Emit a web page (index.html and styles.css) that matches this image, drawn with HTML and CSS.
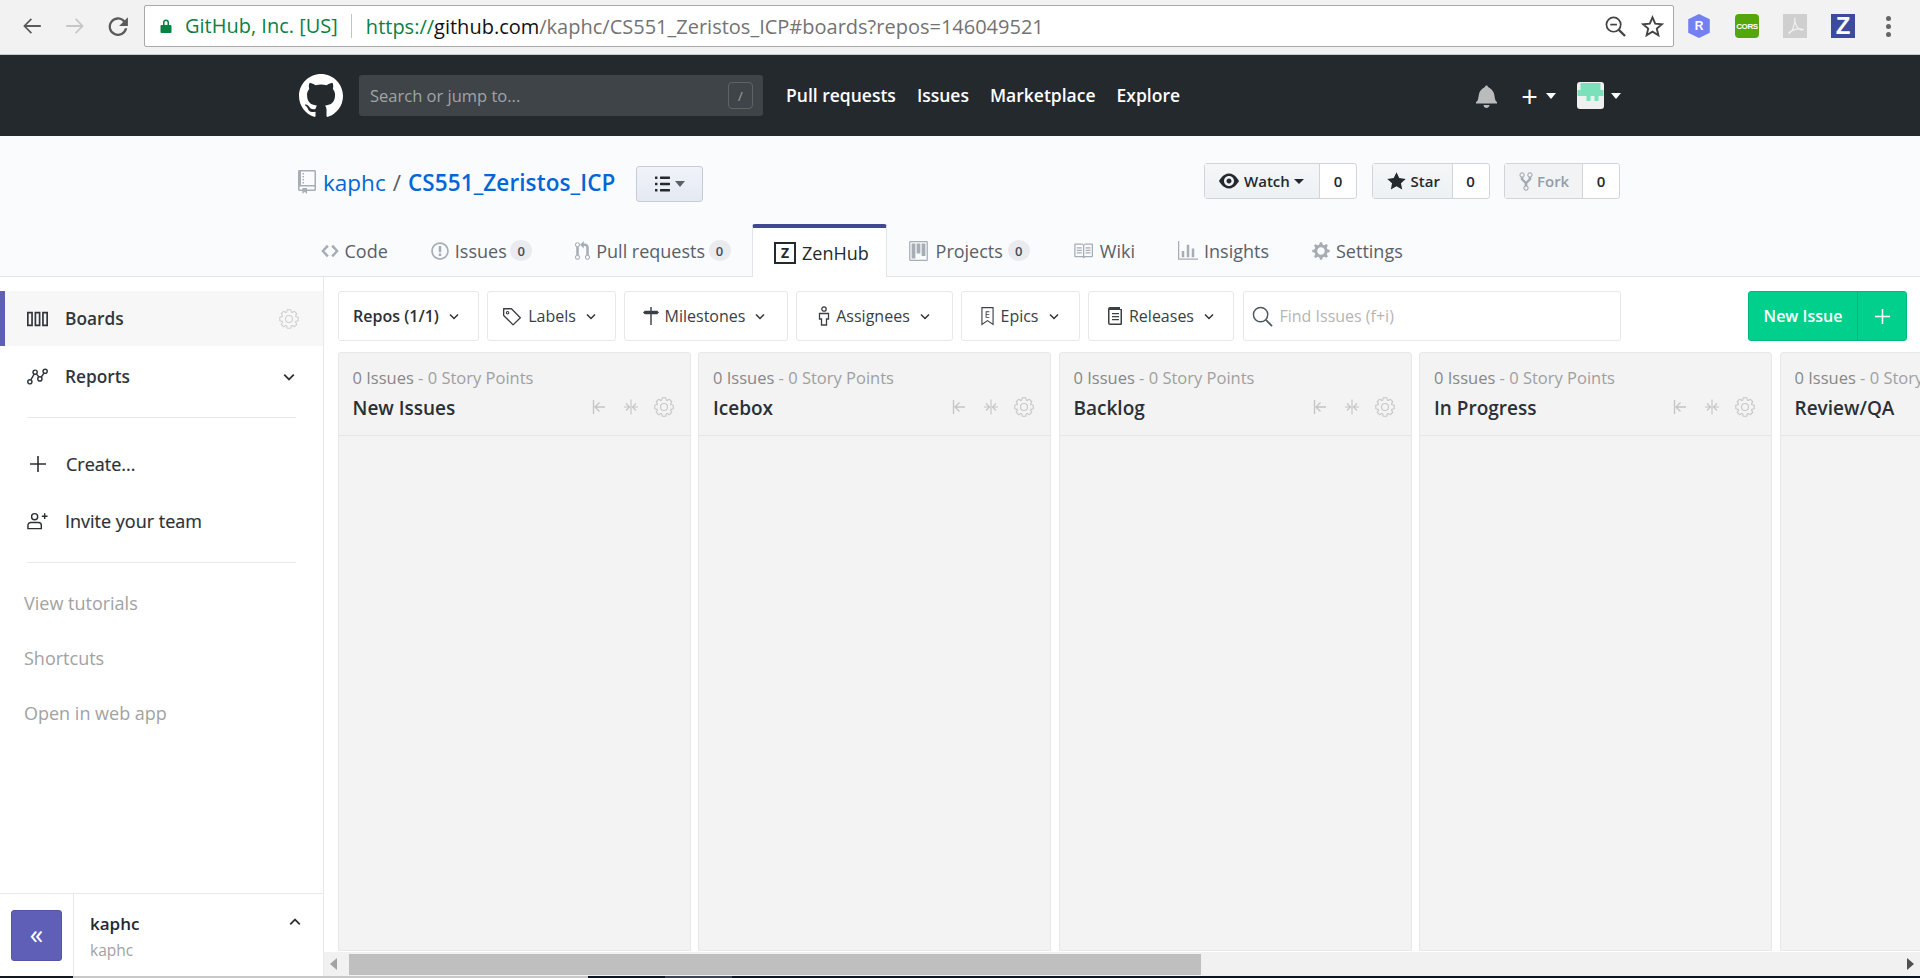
FILE: index.html
```html
<!DOCTYPE html>
<html lang="en">
<head>
<meta charset="utf-8">
<title>kaphc/CS551_Zeristos_ICP</title>
<link rel="stylesheet" href="styles.css">
</head>
<body>
<svg class="defs" width="0" height="0" aria-hidden="true">
  <symbol id="i-mark" viewBox="0 0 16 16"><path d="M8 0C3.58 0 0 3.58 0 8c0 3.54 2.29 6.53 5.47 7.59.4.07.55-.17.55-.38 0-.19-.01-.82-.01-1.49-2.01.37-2.53-.49-2.69-.94-.09-.23-.48-.94-.82-1.13-.28-.15-.68-.52-.01-.53.63-.01 1.08.58 1.23.82.72 1.21 1.87.87 2.33.66.07-.52.28-.87.51-1.07-1.78-.2-3.64-.89-3.64-3.95 0-.87.31-1.59.82-2.15-.08-.2-.36-1.02.08-2.12 0 0 .67-.21 2.2.82.64-.18 1.32-.27 2-.27.68 0 1.36.09 2 .27 1.53-1.04 2.2-.82 2.2-.82.44 1.1.16 1.92.08 2.12.51.56.82 1.27.82 2.15 0 3.07-1.87 3.75-3.65 3.95.29.25.54.73.54 1.48 0 1.07-.01 1.93-.01 2.2 0 .21.15.46.55.38A8.013 8.013 0 0 0 16 8c0-4.42-3.58-8-8-8z"/></symbol>
  <symbol id="i-gear" viewBox="0 0 14 16"><path d="M14 8.77v-1.6l-1.94-.64-.45-1.09.88-1.84-1.13-1.13-1.81.91-1.09-.45-.69-1.92h-1.6l-.63 1.94-1.11.45-1.84-.88-1.13 1.13.91 1.81-.45 1.09L0 7.23v1.59l1.94.64.45 1.09-.88 1.84 1.13 1.13 1.81-.91 1.09.45.69 1.92h1.59l.63-1.94 1.11-.45 1.84.88 1.13-1.13-.92-1.81.47-1.09L14 8.75v.02zM7 11c-1.66 0-3-1.34-3-3s1.34-3 3-3 3 1.34 3 3-1.34 3-3 3z"/></symbol>
  <symbol id="i-gear-line" viewBox="0 0 20 20"><g fill="none" stroke="currentColor" stroke-width="1.100" transform="translate(10 10)"><polygon stroke-linejoin="round" points="6.81,-2.34 9.23,-1.79 9.23,1.79 6.81,2.34 6.47,3.16 7.79,5.26 5.26,7.79 3.16,6.47 2.34,6.81 1.79,9.23 -1.79,9.23 -2.34,6.81 -3.16,6.47 -5.26,7.79 -7.79,5.26 -6.47,3.16 -6.81,2.34 -9.23,1.79 -9.23,-1.79 -6.81,-2.34 -6.47,-3.16 -7.79,-5.26 -5.26,-7.79 -3.16,-6.47 -2.34,-6.81 -1.79,-9.23 1.79,-9.23 2.34,-6.81 3.16,-6.47 5.26,-7.79 7.79,-5.26 6.47,-3.16"/><circle r="3.500"/></g></symbol>
  <symbol id="i-eye" viewBox="0 0 16 16"><path d="M8.06 2C3 2 0 8 0 8s3 6 8.06 6C13 14 16 8 16 8s-3-6-7.94-6zM8 12c-2.2 0-4-1.78-4-4 0-2.2 1.8-4 4-4 2.22 0 4 1.8 4 4 0 2.22-1.78 4-4 4zm2-4c0 1.11-.89 2-2 2-1.11 0-2-.89-2-2 0-1.11.89-2 2-2 1.11 0 2 .89 2 2z"/></symbol>
  <symbol id="i-star" viewBox="0 0 14 16"><path d="M14 6l-4.9-.64L7 1 4.9 5.36 0 6l3.6 3.26L2.67 14 7 11.67 11.33 14l-.93-4.74L14 6z"/></symbol>
  <symbol id="i-fork" viewBox="0 0 10 16"><path d="M8 1a1.993 1.993 0 0 0-1 3.72V6L5 8 3 6V4.72A1.993 1.993 0 0 0 2 1a1.993 1.993 0 0 0-1 3.72V6.5l3 3v1.78A1.993 1.993 0 0 0 5 15a1.993 1.993 0 0 0 1-3.72V9.5l3-3V4.72A1.993 1.993 0 0 0 8 1zM2 4.2C1.34 4.2.8 3.65.8 3c0-.65.55-1.2 1.2-1.2.65 0 1.2.55 1.2 1.2 0 .65-.55 1.2-1.2 1.2zm3 10c-.66 0-1.2-.55-1.2-1.2 0-.65.55-1.2 1.2-1.2.65 0 1.2.55 1.2 1.2 0 .65-.55 1.2-1.2 1.2zm3-10c-.66 0-1.2-.55-1.2-1.2 0-.65.55-1.2 1.2-1.2.65 0 1.2.55 1.2 1.2 0 .65-.55 1.2-1.2 1.2z"/></symbol>
  <symbol id="i-code" viewBox="0 0 14 16"><path d="M9.5 3L8 4.5 11.5 8 8 11.5 9.5 13 14 8 9.5 3zm-5 0L0 8l4.5 5L6 11.5 2.5 8 6 4.5 4.5 3z"/></symbol>
  <symbol id="i-issue" viewBox="0 0 14 16"><path d="M7 2.3c3.14 0 5.7 2.56 5.7 5.7s-2.56 5.7-5.7 5.7A5.71 5.71 0 0 1 1.3 8c0-3.14 2.56-5.7 5.7-5.7zM7 1C3.14 1 0 4.14 0 8s3.14 7 7 7 7-3.14 7-7-3.14-7-7-7zm1 3H6v5h2V4zm0 6H6v2h2v-2z"/></symbol>
  <symbol id="i-pr" viewBox="0 0 12 16"><path d="M11 11.28V5c-.03-.78-.34-1.47-.94-2.06C9.46 2.35 8.78 2.03 8 2H7V0L4 3l3 3V4h1c.27.02.48.11.69.31.21.2.3.42.31.69v6.28A1.993 1.993 0 0 0 10 15a1.993 1.993 0 0 0 1-3.72zm-1 2.92c-.66 0-1.2-.55-1.2-1.2 0-.65.55-1.2 1.2-1.2.65 0 1.2.55 1.2 1.2 0 .65-.55 1.2-1.2 1.2zM4 3c0-1.11-.89-2-2-2a1.993 1.993 0 0 0-1 3.72v6.56A1.993 1.993 0 0 0 2 15a1.993 1.993 0 0 0 1-3.72V4.72c.59-.34 1-.98 1-1.72zm-.8 10c0 .66-.55 1.2-1.2 1.2-.65 0-1.2-.55-1.2-1.2 0-.65.55-1.2 1.2-1.2.65 0 1.2.55 1.2 1.2zM2 4.2C1.34 4.2.8 3.65.8 3c0-.65.55-1.2 1.2-1.2.65 0 1.2.55 1.2 1.2 0 .65-.55 1.2-1.2 1.2z"/></symbol>
  <symbol id="i-project" viewBox="0 0 15 16"><path d="M10 12h3V2h-3v10zm-4-2h3V2H6v8zm-4 4h3V2H2v12zm-1 1h13V1H1v14zM14 0H1a1 1 0 0 0-1 1v14a1 1 0 0 0 1 1h13a1 1 0 0 0 1-1V1a1 1 0 0 0-1-1z"/></symbol>
  <symbol id="i-book" viewBox="0 0 16 16"><path d="M3 5h4v1H3V5zm0 3h4V7H3v1zm0 2h4V9H3v1zm11-5h-4v1h4V5zm0 2h-4v1h4V7zm0 2h-4v1h4V9zm2-6v9c0 .55-.45 1-1 1H9.5l-1 1-1-1H2c-.55 0-1-.45-1-1V3c0-.55.45-1 1-1h5.5l1 1 1-1H15c.55 0 1 .45 1 1zm-8 .5L7.5 3H2v9h6V3.5zm7-.5H9.5l-.5.5V12h6V3z"/></symbol>
  <symbol id="i-graph" viewBox="0 0 16 16"><path d="M16 14v1H0V0h1v14h15zM5 13H3V8h2v5zm4 0H7V3h2v10zm4 0h-2V6h2v7z"/></symbol>
  <symbol id="i-repo" viewBox="0 0 12 16"><path d="M4 9H3V8h1v1zm0-3H3v1h1V6zm0-2H3v1h1V4zm0-2H3v1h1V2zm8-1v12c0 .55-.45 1-1 1H6v2l-1.5-1.5L3 16v-2H1c-.55 0-1-.45-1-1V1c0-.55.45-1 1-1h10c.55 0 1 .45 1 1zm-1 10H1v2h2v-1h3v1h5v-2zm0-10H2v9h9V1z"/></symbol>
  <symbol id="i-bell" viewBox="0 0 14 16"><path d="M14 12v1H0v-1l.73-.58c.77-.77.81-2.55 1.19-4.42C2.69 3.23 6 2 6 2c0-.55.45-1 1-1s1 .45 1 1c0 0 3.39 1.23 4.16 5 .38 1.88.42 3.66 1.19 4.42l.66.58H14zm-7 4c1.11 0 2-.89 2-2H5c0 1.11.89 2 2 2z"/></symbol>
  <symbol id="i-list" viewBox="0 0 12 16"><path d="M2 13c0 .59 0 1-.59 1H.59C0 14 0 13.59 0 13c0-.59 0-1 .59-1h.81c.59 0 .59.41.59 1H2zm2.59-9h6.81c.59 0 .59-.41.59-1 0-.59 0-1-.59-1H4.59C4 2 4 2.41 4 3c0 .59 0 1 .59 1zM1.41 7H.59C0 7 0 7.41 0 8c0 .59 0 1 .59 1h.81c.59 0 .59-.41.59-1 0-.59 0-1-.59-1h.01zm0-5H.59C0 2 0 2.41 0 3c0 .59 0 1 .59 1h.81c.59 0 .59-.41.59-1 0-.59 0-1-.59-1h.01zm10 5H4.59C4 7 4 7.41 4 8c0 .59 0 1 .59 1h6.81c.59 0 .59-.41.59-1 0-.59 0-1-.59-1h.01zm0 5H4.59C4 12 4 12.41 4 13c0 .59 0 1 .59 1h6.81c.59 0 .59-.41.59-1 0-.59 0-1-.59-1h.01z"/></symbol>
  <symbol id="i-chev" viewBox="0 0 10 6"><path d="M1 1l4 4 4-4" fill="none" stroke="currentColor" stroke-width="1.5"/></symbol>
  <symbol id="i-tag" viewBox="0 0 18 18"><path d="M1.5 2.5h7l8 8-6.5 6.5-8.5-8.5z" fill="none" stroke="currentColor" stroke-width="1.2" stroke-linejoin="round"/><circle cx="5" cy="6" r="1.1" fill="none" stroke="currentColor"/></symbol>
  <symbol id="i-miles" viewBox="0 0 18 20"><path d="M8.200 0h1.600v4H16l2 2-2 2H9.800v12H8.200V8H2L0 6l2-2h6.200z"/></symbol>
  <symbol id="i-person" viewBox="0 0 12 20"><circle cx="6" cy="3" r="2.2" fill="none" stroke="currentColor" stroke-width="1.3"/><path d="M1.5 7.5h9v5.5h-2v6h-5v-6h-2z" fill="none" stroke="currentColor" stroke-width="1.3"/></symbol>
  <symbol id="i-epic" viewBox="0 0 14 20"><path d="M1 1h12v18l-6-4-6 4z" fill="none" stroke="currentColor" stroke-width="1.2"/><path d="M5 5h4v1H6v2h3v1H6v2h3v1H5z"/></symbol>
  <symbol id="i-release" viewBox="0 0 16 20"><path d="M3 1h10v2h2v15a1 1 0 0 1-1 1H3a2 2 0 0 1-2-2V3a2 2 0 0 1 2-2zm-.5 3v13a.6.6 0 0 0 .6.6H13.500V4zM5 7h7v1.200H5zm0 3h7v1.200H5zm0 3h7v1.200H5z"/></symbol>
  <symbol id="i-collapse" viewBox="0 0 13 16"><path d="M1.500 1v14M13 8H3M7.500 3.500L3 8l4.500 4.500" fill="none" stroke="currentColor" stroke-width="1.300"/></symbol>
  <symbol id="i-wip" viewBox="0 0 14 16"><path d="M7 .5v15M0 8h5M2 4.500L5.500 8 2 11.500M14 8H9M12 4.500L8.500 8l3.500 3.500" fill="none" stroke="currentColor" stroke-width="1.100"/></symbol>
</svg>

<header class="chrome">
  <div class="chrome-nav">
    <svg class="cicon" viewBox="0 0 20 20"><path d="M18 9H5l5-5-1.100-1.100L2 10l6.900 7.100L10 16l-5-5h13z"/></svg>
    <svg class="cicon cicon-off" viewBox="0 0 20 20"><path d="M2 9h13l-5-5 1.100-1.100L18 10l-6.900 7.100L10 16l5-5H2z"/></svg>
    <svg class="cicon" viewBox="0 0 20 20"><path d="M16.200 4.800A8.500 8.500 0 1 0 18.400 12h-2.200a6.400 6.400 0 1 1-1.500-5.700L11 10h8V2z"/></svg>
  </div>
  <div class="omnibox">
    <svg class="lock" viewBox="0 0 12 16"><path d="M3 7V4.500a3 3 0 0 1 6 0V7h1.500a1 1 0 0 1 1 1v6a1 1 0 0 1-1 1h-9a1 1 0 0 1-1-1V8a1 1 0 0 1 1-1zm1.500 0h3V4.500a1.500 1.500 0 0 0-3 0z"/></svg>
    <span class="ev">GitHub, Inc. [US]</span>
    <span class="url"><span class="url-s">https://</span><span class="url-h">github.com</span>/kaphc/CS551_Zeristos_ICP#boards?repos=146049521</span>
    <svg class="omni-icon" viewBox="0 0 22 22"><circle cx="9" cy="9" r="7.500" fill="none" stroke="currentColor" stroke-width="1.800"/><path d="M5.500 9h7" stroke="currentColor" stroke-width="1.800"/><path d="M14.500 14.500l6.500 6.500" stroke="currentColor" stroke-width="2.400"/></svg>
    <svg class="omni-icon omni-star" viewBox="0 0 24 24"><path d="M12 2.500l2.800 6.500 7 .6-5.300 4.600 1.600 6.900-6.100-3.700-6.100 3.700 1.600-6.900-5.300-4.600 7-.6z" fill="none" stroke="currentColor" stroke-width="2"/></svg>
  </div>
  <div class="exts">
    <span class="ext ext-r">R</span>
    <span class="ext ext-cors">CORS</span>
    <span class="ext ext-pdf"><svg viewBox="0 0 24 24"><path d="M12 3c-1 3 1 8 3 11 2 2 5 3 6 2-3-2-9-1-14 2-2 1-2 3-1 2 3-2 6-9 6-17z" fill="none" stroke="#f2f2f2" stroke-width="1.200"/></svg></span>
    <span class="ext ext-z">Z</span>
    <span class="kebab"><i></i><i></i><i></i></span>
  </div>
</header>

<nav class="ghnav">
  <svg class="ghlogo"><use href="#i-mark"/></svg>
  <div class="ghsearch"><span>Search or jump to...</span><kbd>/</kbd></div>
  <a class="ghlink">Pull requests</a>
  <a class="ghlink">Issues</a>
  <a class="ghlink">Marketplace</a>
  <a class="ghlink">Explore</a>
  <div class="ghright">
    <svg class="ghbell"><use href="#i-bell"/></svg>
    <span class="ghplus">+</span><i class="caret caret-w"></i>
    <span class="avatar"><svg viewBox="0 0 26 20"><path fill="#7de0bd" d="M3 1h20v7h3v6h-5v5h-4v-5h-4v5H9v-5H0V8h3z"/></svg></span><i class="caret caret-w"></i>
  </div>
</nav>

<section class="repohead">
  <div class="repotop">
    <svg class="repoicon"><use href="#i-repo"/></svg>
    <a class="owner">kaphc</a><span class="slash">/</span><a class="reponame">CS551_Zeristos_ICP</a>
    <button class="menubtn"><svg><use href="#i-list"/></svg><i class="caret caret-d"></i></button>
    <div class="actions">
      <div class="act"><span class="act-l act-watch"><svg class="ic-eye"><use href="#i-eye"/></svg>Watch<i class="caret caret-k"></i></span><span class="act-n">0</span></div>
      <div class="act"><span class="act-l act-star"><svg class="ic-star"><use href="#i-star"/></svg>Star</span><span class="act-n">0</span></div>
      <div class="act"><span class="act-l act-fork"><svg class="ic-fork"><use href="#i-fork"/></svg>Fork</span><span class="act-n">0</span></div>
    </div>
  </div>
  <div class="tabs">
    <a class="tab"><svg class="ti ti-code"><use href="#i-code"/></svg>Code</a>
    <a class="tab"><svg class="ti ti-issue"><use href="#i-issue"/></svg>Issues<span class="count count-tight">0</span></a>
    <a class="tab"><svg class="ti ti-pr"><use href="#i-pr"/></svg>Pull requests<span class="count count-tight">0</span></a>
    <a class="tab tab-on"><span class="zlogo">Z</span>ZenHub</a>
    <a class="tab"><svg class="ti ti-proj"><use href="#i-project"/></svg>Projects<span class="count">0</span></a>
    <a class="tab"><svg class="ti ti-book"><use href="#i-book"/></svg>Wiki</a>
    <a class="tab"><svg class="ti ti-graph"><use href="#i-graph"/></svg>Insights</a>
    <a class="tab"><svg class="ti ti-gear"><use href="#i-gear"/></svg>Settings</a>
  </div>
</section>

<div class="workspace">
  <aside class="side">
    <div class="side-main">
      <a class="sitem sitem-on">
        <svg class="sicon" viewBox="0 0 20 14"><path fill="none" stroke="currentColor" stroke-width="1.600" d="M.8 1h4v12h-4zM8 1h4v12H8zM15.200 1h4v12h-4z"/></svg>
        <span>Boards</span>
        <svg class="sgear"><use href="#i-gear-line"/></svg>
      </a>
      <a class="sitem">
        <svg class="sicon sicon-rep" viewBox="0 0 22 18"><g fill="none" stroke="currentColor" stroke-width="1.500"><circle cx="3" cy="14" r="2.200"/><circle cx="8.500" cy="4" r="2.200"/><circle cx="13.500" cy="11" r="2.200"/><circle cx="19" cy="3" r="2.200"/><path d="M4 12l3.500-6M10 6l2.500 3M15 9l2.800-4"/></g></svg>
        <span>Reports</span>
        <svg class="schev"><use href="#i-chev"/></svg>
      </a>
      <hr class="sdiv">
      <a class="sitem sitem-mid">
        <svg class="sicon sicon-plus" viewBox="0 0 16 16"><path d="M7.200 0h1.600v7.200H16v1.600H8.800V16H7.200V8.800H0V7.200h7.200z"/></svg>
        <span>Create...</span>
      </a>
      <a class="sitem sitem-mid">
        <svg class="sicon sicon-inv" viewBox="0 0 22 18"><g fill="none" stroke="currentColor" stroke-width="1.500"><circle cx="8" cy="4.500" r="3.200"/><path d="M1 17v-3.500a3 3 0 0 1 3-3h8a3 3 0 0 1 3 3V17z"/><path d="M18.500 1v6M15.500 4h6"/></g></svg>
        <span>Invite your team</span>
      </a>
      <hr class="sdiv sdiv2">
      <a class="slink">View tutorials</a>
      <a class="slink">Shortcuts</a>
      <a class="slink">Open in web app</a>
    </div>
    <div class="sfoot">
      <div class="sfoot-btn"><span class="collapse">«</span></div>
      <div class="sfoot-user">
        <div class="sfoot-name">kaphc</div>
        <div class="sfoot-sub">kaphc</div>
        <svg class="sfoot-chev"><use href="#i-chev"/></svg>
      </div>
    </div>
  </aside>

  <main class="main">
    <div class="toolbar">
      <button class="fbtn f-repos">Repos (1/1)<svg class="fchev"><use href="#i-chev"/></svg></button>
      <button class="fbtn f-labels"><svg class="fi fi-tag"><use href="#i-tag"/></svg>Labels<svg class="fchev"><use href="#i-chev"/></svg></button>
      <button class="fbtn f-miles"><svg class="fi fi-miles"><use href="#i-miles"/></svg>Milestones<svg class="fchev"><use href="#i-chev"/></svg></button>
      <button class="fbtn f-assign"><svg class="fi fi-person"><use href="#i-person"/></svg>Assignees<svg class="fchev"><use href="#i-chev"/></svg></button>
      <button class="fbtn f-epics"><svg class="fi fi-epic"><use href="#i-epic"/></svg>Epics<svg class="fchev"><use href="#i-chev"/></svg></button>
      <button class="fbtn f-rel"><svg class="fi fi-rel"><use href="#i-release"/></svg>Releases<svg class="fchev"><use href="#i-chev"/></svg></button>
      <div class="find"><svg viewBox="0 0 22 22"><circle cx="9" cy="9" r="7.500" fill="none" stroke="currentColor" stroke-width="1.500"/><path d="M14.500 14.500l6.500 6.500" stroke="currentColor" stroke-width="1.800"/></svg><span>Find Issues (f+i)</span></div>
      <div class="newissue"><span class="ni-l">New Issue</span><span class="ni-p"><svg viewBox="0 0 14 14"><path d="M6.300 0h1.400v6.300H14v1.400H7.700V14H6.300V7.700H0V6.300h6.300z"/></svg></span></div>
    </div>
    <div class="board">
      <section class="col">
        <header class="col-h"><div class="col-meta"><b>0 Issues</b> - 0 Story Points</div><div class="col-row"><h3>New Issues</h3><span class="col-tools"><svg class="ct"><use href="#i-collapse"/></svg><svg class="ct"><use href="#i-wip"/></svg><svg class="cg"><use href="#i-gear-line"/></svg></span></div></header>
      </section>
      <section class="col">
        <header class="col-h"><div class="col-meta"><b>0 Issues</b> - 0 Story Points</div><div class="col-row"><h3>Icebox</h3><span class="col-tools"><svg class="ct"><use href="#i-collapse"/></svg><svg class="ct"><use href="#i-wip"/></svg><svg class="cg"><use href="#i-gear-line"/></svg></span></div></header>
      </section>
      <section class="col">
        <header class="col-h"><div class="col-meta"><b>0 Issues</b> - 0 Story Points</div><div class="col-row"><h3>Backlog</h3><span class="col-tools"><svg class="ct"><use href="#i-collapse"/></svg><svg class="ct"><use href="#i-wip"/></svg><svg class="cg"><use href="#i-gear-line"/></svg></span></div></header>
      </section>
      <section class="col">
        <header class="col-h"><div class="col-meta"><b>0 Issues</b> - 0 Story Points</div><div class="col-row"><h3>In Progress</h3><span class="col-tools"><svg class="ct"><use href="#i-collapse"/></svg><svg class="ct"><use href="#i-wip"/></svg><svg class="cg"><use href="#i-gear-line"/></svg></span></div></header>
      </section>
      <section class="col">
        <header class="col-h"><div class="col-meta"><b>0 Issues</b> - 0 Story Points</div><div class="col-row"><h3>Review/QA</h3><span class="col-tools"><svg class="ct"><use href="#i-collapse"/></svg><svg class="ct"><use href="#i-wip"/></svg><svg class="cg"><use href="#i-gear-line"/></svg></span></div></header>
      </section>
    </div>
    <div class="hscroll">
      <span class="arrow arrow-l"></span>
      <div class="track"><div class="thumb"></div></div>
      <span class="arrow arrow-r"></span>
    </div>
  </main>
</div>
<div class="taskbar"><span class="tb-a"></span><span class="tb-b"></span><span class="tb-c"></span><span class="tb-d"></span><span class="tb-e"></span></div>
</body>
</html>
```

FILE: styles.css
```css
* { box-sizing: border-box; }
html, body { margin: 0; height: 978px; overflow: hidden; }
body {
  display: flex;
  flex-direction: column;
  width: 1920px;
  background: #fff;
  color: #24292e;
  font-family: "Open Sans", "Liberation Sans", sans-serif;
}
.defs { position: absolute; }
button { font: inherit; color: inherit; cursor: default; }
svg { fill: currentColor; fill-rule: evenodd; display: block; flex: none; }

/* browser chrome */
.chrome {
  flex: none;
  height: 55px;
  display: flex;
  align-items: center;
  background: #f2f2f2;
  border-bottom: 1px solid #c8c8c8;
  padding-bottom: 2px;
}
.chrome-nav {
  width: 144px;
  display: flex;
  align-items: center;
  gap: 21px;
  padding-left: 21px;
  color: #5a5a5a;
}
.cicon { width: 22px; height: 22px; }
.cicon-off { color: #c6c6c6; }
.omnibox {
  width: 1530px;
  height: 42px;
  display: flex;
  align-items: center;
  background: #fff;
  border: 1px solid #a9a9a9;
  border-radius: 2px;
  font-size: 20px;
  padding-left: 15px;
}
.lock { width: 12px; height: 16px; color: #0b8043; }
.ev {
  color: #0b8043;
  margin-left: 13px;
  padding-right: 13px;
  border-right: 1px solid #c4c4c4;
  line-height: 24px;
  white-space: nowrap;
}
.url { color: #737373; margin-left: 14px; flex: 1; white-space: nowrap; }
.url-s { color: #0b8043; }
.url-h { color: #111; }
.omni-icon { width: 21px; height: 21px; color: #444; margin-right: 15px; }
.omni-star { width: 23px; height: 23px; margin-right: 9px; }
.exts { display: flex; align-items: center; flex: 1; padding-left: 13px; }
.ext {
  width: 24px;
  height: 24px;
  display: flex;
  align-items: center;
  justify-content: center;
  margin-right: 24px;
  font-family: "Liberation Sans", sans-serif;
  font-weight: 700;
  color: #fff;
}
.ext-r {
  background: #7380f2;
  clip-path: polygon(50% 0, 95% 22%, 95% 78%, 50% 100%, 5% 78%, 5% 22%);
  font-size: 12px;
}
.ext-cors {
  background: #55a50c;
  border-radius: 4px;
  font-size: 8px;
  letter-spacing: -.4px;
}
.ext-pdf { background: #cfcfcf; }
.ext-pdf svg { width: 22px; height: 22px; }
.ext-z { background: #3c4b9d; font-size: 24px; }
.kebab { display: flex; flex-direction: column; gap: 3px; margin-left: 7px; }
.kebab i { width: 5px; height: 5px; border-radius: 50%; background: #666; }

/* github nav */
.ghnav {
  flex: none;
  height: 81px;
  display: flex;
  align-items: center;
  background: #24292e;
  padding: 0 299px;
  color: #fff;
  font-weight: 600;
  font-size: 17.500px;
}
.ghlogo { width: 44px; height: 44px; color: #fff; margin-right: 16px; }
.ghsearch {
  width: 404px;
  height: 41px;
  display: flex;
  align-items: center;
  justify-content: space-between;
  background: #3f4448;
  border-radius: 3px;
  padding: 0 10px 0 11px;
  font-weight: 400;
  font-size: 16.500px;
  color: #a0a4a7;
  margin-right: 23px;
}
.ghsearch kbd {
  width: 25px;
  height: 27px;
  border: 1px solid #5f6366;
  border-radius: 4px;
  font: inherit;
  font-size: 13px;
  display: flex;
  align-items: center;
  justify-content: center;
}
.ghlink { margin-right: 21px; padding-bottom: 2px; white-space: nowrap; }
.ghright { display: flex; align-items: center; margin-left: auto; }
.ghbell { width: 21px; height: 24px; color: #b9bbbd; margin-right: 24px; }
.ghplus { font-size: 29px; font-weight: 400; line-height: 1; width: 17px; display: flex; justify-content: center; margin-right: 8px; }
.caret { display: block; width: 0; height: 0; border-style: solid; border-width: 6px 5px 0; border-color: transparent; }
.caret-w { border-top-color: #fff; }
.caret-d { border-top-color: #586069; }
.caret-k { border-top-color: #24292e; border-width: 5px 5px 0; margin-left: 4px; }
.avatar { width: 27px; height: 27px; background: #f0f0f0; border-radius: 3px; margin: 0 7px 0 21px; overflow: hidden; }
.avatar svg { width: 27px; height: 20px; }

/* repo head */
.repohead {
  flex: none;
  height: 141px;
  background: #fafbfc;
  border-bottom: 1px solid #e1e4e8;
  display: flex;
  flex-direction: column;
}
.repotop {
  height: 88px;
  display: flex;
  align-items: center;
  padding: 4px 300px 0 298px;
  font-size: 22.500px;
}
.repoicon { width: 18px; height: 24px; color: #a6adb5; margin-right: 7px; }
.owner { color: #0366d6; }
.slash { color: #586069; margin: 0 7px; }
.reponame { color: #0366d6; font-weight: 600; letter-spacing: .1px; }
.menubtn {
  width: 67px;
  height: 36px;
  margin: 4px 0 0 21px;
  display: flex;
  align-items: center;
  justify-content: center;
  gap: 5px;
  background: linear-gradient(#f0f3f8, #e4e9f3);
  border: 1px solid #c6ccd6;
  border-radius: 3px;
  padding: 0;
}
.menubtn svg { width: 15px; height: 20px; color: #24292e; }
.actions { margin: -2px 0 0 auto; display: flex; gap: 14.500px; font-size: 15px; }
.act {
  height: 36px;
  display: flex;
  border: 1px solid #d1d5da;
  border-radius: 3px;
  background: #fff;
}
.act-l {
  display: flex;
  align-items: center;
  background: linear-gradient(#f4f6f8, #eef1f4);
  border-right: 1px solid #d1d5da;
  font-weight: 600;
  padding-left: 14px;
}
.act-watch { width: 115px; }
.act-star { width: 80px; }
.act-fork { width: 78px; color: #959da5; background: #f1f3f5; }
.act-n { width: 36px; display: flex; align-items: center; justify-content: center; font-weight: 600; }
.ic-eye { width: 20px; height: 20px; margin-right: 5px; }
.ic-star { width: 19px; height: 21px; margin-right: 5px; }
.ic-fork { width: 14px; height: 21px; color: #a3aab1; margin-right: 4px; }

.tabs { flex: 1; display: flex; padding-left: 299px; align-items: flex-end; font-size: 18px; color: #586069; }
.tab {
  height: 53px;
  padding: 0 21.500px;
  display: flex;
  align-items: center;
  white-space: nowrap;
  margin-bottom: -1px;
}
.tab-on {
  width: 135px;
  background: #fff;
  color: #24292e;
  border: 1px solid #e1e4e8;
  border-top: 4px solid #3f4a92;
  border-bottom: 0;
  border-radius: 3px 3px 0 0;
  padding: 0 0 0 21px;
}
.ti { color: #a6adb5; height: 20px; margin-right: 6px; }
.ti-code { width: 18px; }
.ti-issue { width: 18px; }
.ti-pr { width: 15px; }
.ti-proj { width: 19px; margin-right: 8px; }
.ti-book { width: 20px; margin-right: 7px; }
.ti-graph { width: 20px; }
.ti-gear { width: 18px; }
.count {
  width: 22px;
  height: 21px;
  border-radius: 50%;
  background: #e9ebee;
  margin-left: 5px;
  font-size: 13px;
  font-weight: 600;
  display: flex;
  align-items: center;
  justify-content: center;
  color: #444d56;
}
.count-tight { margin-left: 3.500px; }
.zlogo {
  width: 22px;
  height: 22px;
  border: 2px solid #24292e;
  font-size: 14px;
  font-weight: 700;
  display: flex;
  align-items: center;
  justify-content: center;
  margin-right: 6px;
}

/* workspace */
.workspace { flex: none; height: 699px; display: flex; }
.side {
  flex: none;
  width: 324px;
  border-right: 1px solid #e8e8e8;
  display: flex;
  flex-direction: column;
}
.side-main { flex: 1; padding-top: 14px; }
.sitem {
  height: 57px;
  display: flex;
  align-items: center;
  padding: 0 27px;
  font-size: 17.300px;
  font-weight: 600;
  color: #30363c;
}
.sitem > span { margin-left: 17px; flex: 1; }
.sitem-on { height: 55px; background: #f7f7f7; box-shadow: inset 5px 0 0 #5f5fb8; margin-bottom: 2px; }
.sitem-mid { font-weight: 400; font-size: 18px; color: #2b3036; -webkit-text-stroke: .2px; }
.sicon { width: 21px; height: 16px; }
.sicon-rep { height: 18px; }
.sicon-plus { width: 16px; height: 16px; margin: 0 3px; }
.sicon-inv { height: 18px; }
.sgear { width: 20px; height: 20px; color: #d0d0d0; margin-right: -3px; }
.schev { width: 12px; height: 8px; color: #333; margin-right: 1px; }
.sdiv { margin: 12px 27px 17px; height: 1px; border: 0; background: #e8e8e8; }
.sdiv2 { margin: 13px 27px 12px; }
.slink { display: flex; align-items: center; height: 55px; padding-left: 24px; font-size: 18px; color: #a2a2a2; }
.sfoot { flex: none; height: 83px; border-top: 1px solid #e8e8e8; display: flex; }
.sfoot-btn { width: 74px; border-right: 1px solid #e8e8e8; display: flex; padding: 16px 0 0 11px; }
.collapse {
  width: 51px;
  height: 51px;
  background: #5f5fb8;
  border: 1px solid #5454a8;
  border-radius: 3px;
  color: #fff;
  font-size: 27px;
  display: flex;
  align-items: center;
  justify-content: center;
  padding-bottom: 5px;
}
.sfoot-user { flex: 1; position: relative; padding: 17px 0 0 16px; }
.sfoot-name { font-size: 17px; font-weight: 600; line-height: 26px; }
.sfoot-sub { font-size: 15.500px; color: #a2a2a2; line-height: 27px; }
.sfoot-chev { position: absolute; right: 22px; top: 24px; width: 12px; height: 8px; transform: rotate(180deg); color: #333; }

/* main */
.main { flex: 1; min-width: 0; display: flex; flex-direction: column; overflow: hidden; }
.toolbar { flex: none; display: flex; padding: 14px 13px 0 13.500px; height: 75px; gap: 8px; font-size: 16px; }
.fbtn {
  height: 50px;
  display: flex;
  align-items: center;
  justify-content: center;
  background: #fff;
  border: 1px solid #e8e8e8;
  border-radius: 3px;
  color: #3a4046;
  padding: 0;
  white-space: nowrap;
}
.f-repos { width: 141px; font-weight: 600; color: #2b3036; padding-right: 4px; }
.f-labels { width: 129px; padding-right: 4px; }
.f-miles { width: 164px; padding-right: 3px; }
.f-assign { width: 157px; }
.f-epics { width: 119px; }
.f-rel { width: 146px; margin-right: 1px; }
.fchev { width: 10px; height: 7px; margin-left: 10px; color: #333; }
.fi { margin-right: 6px; height: 20px; color: #3a4046; }
.fi-tag { width: 20px; }
.fi-miles { width: 16px; }
.fi-person { width: 12px; }
.fi-epic { width: 13px; }
.fi-rel { width: 16px; }
.find {
  width: 378px;
  height: 50px;
  display: flex;
  align-items: center;
  gap: 7px;
  padding-left: 8px;
  border: 1px solid #e8e8e8;
  border-radius: 3px;
  color: #b5b5b5;
}
.find svg { width: 21px; height: 21px; color: #4d565e; }
.newissue {
  width: 159px;
  height: 50px;
  margin-left: auto;
  display: flex;
  align-items: stretch;
  background: #00d08c;
  border-radius: 3px;
  border: 1px solid #00b87c;
  color: #fff;
  font-weight: 600;
}
.ni-l { width: 109px; display: flex; align-items: center; justify-content: center; border-right: 1px solid #00b87c; }
.ni-p { flex: 1; display: flex; align-items: center; justify-content: center; }
.ni-p svg { width: 15px; height: 15px; }

.board { flex: none; height: 600px; display: flex; gap: 7.500px; padding: 0 0 0 13.500px; overflow: hidden; }
.col {
  flex: none;
  width: 353px;
  height: 599px;
  background: #f3f3f3;
  border: 1px solid #e8e8e8;
  border-radius: 3px 3px 0 0;
}
.col-h { height: 83px; border-bottom: 1px solid #e6e6e6; padding: 13px 16px 0 14px; }
.col-meta { font-size: 16.500px; line-height: 24px; color: #a0a0a0; white-space: nowrap; }
.col-meta b { font-weight: 400; color: #888; }
.col-row { display: flex; align-items: center; justify-content: space-between; height: 36px; }
.col-row h3 { margin: 0; font-size: 19px; font-weight: 600; color: #2b3036; white-space: nowrap; }
.col-tools { display: flex; align-items: center; color: #c4c4c4; margin-top: -3px; }
.ct { width: 13px; height: 16px; margin-right: 19px; }
.ct + .ct { width: 14px; margin-right: 16px; }
.cg { width: 20px; height: 20px; color: #c8c8c8; }

.hscroll { flex: 1; display: flex; align-items: center; background: #f1f1f1; padding: 0 6px; }
.arrow { flex: none; width: 0; height: 0; border-style: solid; border-color: transparent; }
.arrow-l { border-width: 6px 7px 6px 0; border-right-color: #a3a3a3; margin-right: 12px; }
.arrow-r { border-width: 6px 0 6px 7px; border-left-color: #505050; margin-left: 11px; }
.track { flex: 1; height: 21px; }
.thumb { width: 852px; height: 21px; background: #bfbfbf; }

.taskbar { flex: none; height: 2px; display: flex; background: #0b1420; }
.tb-a { width: 73px; background: #14181f; }
.tb-b { width: 515px; background: #c8c8c8; }
.tb-c { width: 77px; }
.tb-d { width: 67px; background: #3d4352; }
.tb-e { flex: 1; }
```
